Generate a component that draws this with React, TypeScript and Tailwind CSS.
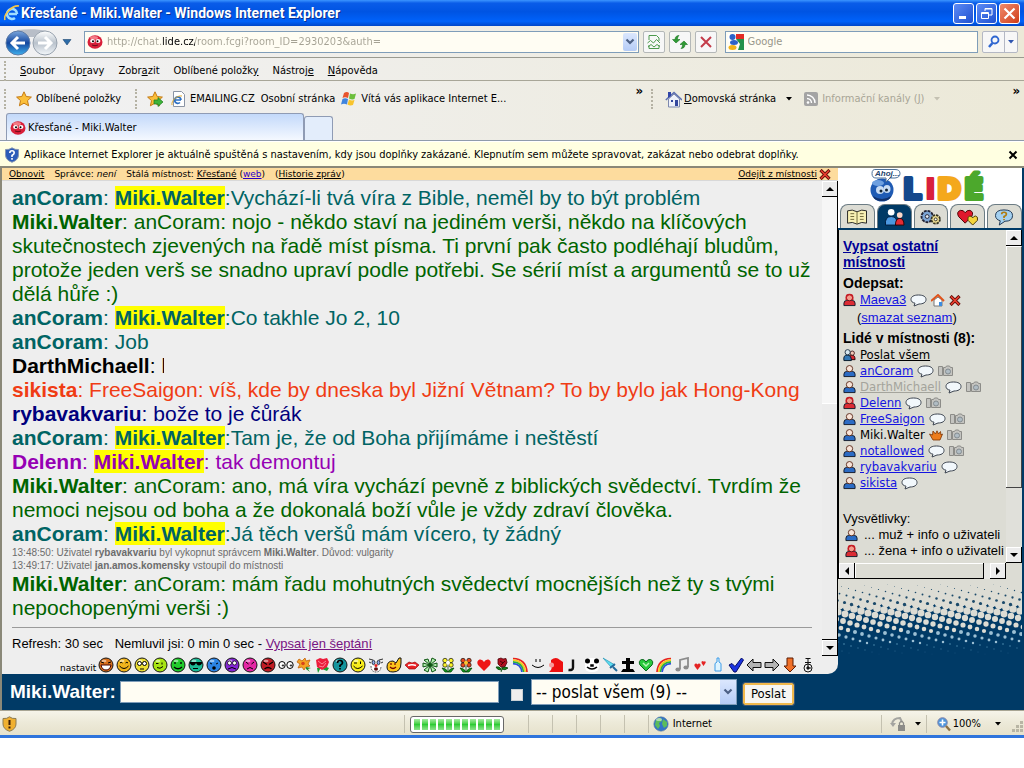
import * as React from "react";

const chatLines = [
  { who: "anCoram", color: "text-[#006464]", hi: true, text: "Vychází-li tvá víra z Bible, neměl by to být problém" },
  {
    who: "Miki.Walter",
    color: "text-[#006400]",
    text: " anCoram: nojo - někdo staví na jediném verši, někdo na klíčových skutečnostech zjevených na řadě míst písma. Ti první pak často podléhají bludům, protože jeden verš se snadno upraví podle potřebi. Se sérií míst a argumentů se to už dělá hůře :)",
  },
  { who: "anCoram", color: "text-[#006464]", hi: true, text: "Co takhle Jo 2, 10" },
  { who: "anCoram", color: "text-[#006464]", text: " Job" },
  { who: "DarthMichaell", color: "text-black", cut: true, text: "" },
  { who: "sikista", color: "text-[#f03c14]", text: " FreeSaigon: víš, kde by dneska byl Jižní Větnam? To by bylo jak Hong-Kong" },
  { who: "rybavakvariu", color: "text-[#00007d]", text: " bože to je čůrák" },
  { who: "anCoram", color: "text-[#006464]", hi: true, text: "Tam je, že od Boha přijímáme i neštěstí" },
  { who: "Delenn", color: "text-[#9600b4]", hi: true, text: " tak demontuj" },
  {
    who: "Miki.Walter",
    color: "text-[#006400]",
    text: " anCoram: ano, má víra vychází pevně z biblických svědectví. Tvrdím že nemoci nejsou od boha a že dokonalá boží vůle je vždy zdraví člověka.",
  },
  { who: "anCoram", color: "text-[#006464]", hi: true, text: "Já těch veršů mám vícero, ty žádný" },
];

const people = [
  { name: "anCoram", cam: true },
  { name: "DarthMichaell", cam: true, muted: true },
  { name: "Delenn", cam: true, woman: true },
  { name: "FreeSaigon", cam: true },
  { name: "Miki.Walter", cam: true, me: true },
  { name: "notallowed", cam: true },
  { name: "rybavakvariu" },
  { name: "sikista" },
];

export default function App() {
  return (
    <main className="min-h-screen bg-white font-['DejaVu_Sans_Condensed','DejaVu_Sans',sans-serif] text-[11px] leading-[14px] text-black">
      <div className="border-b-[3px] border-[#2f74dc] bg-[#ece9d8]">
        <TitleBar />
        <div className="bg-linear-to-r from-[#f1f1f3] to-[#ece9d8]">
          <AddressRow />
          <MenuRow />
          <FavoritesRow />
          <TabRow />
        </div>
        <InfoBar />
        <div className="flex border-l-2 border-t-2 border-[#8a8878] bg-[#003a66] pr-0.5">
          <ChatFrame />
          <Sidebar />
        </div>
        <SendBar />
        <StatusBar />
      </div>
    </main>
  );
}

function TitleBar() {
  return (
    <header className="flex h-[26px] items-center bg-[linear-gradient(to_bottom,#3c95ff,#0a5ce8_12%,#0054e3_45%,#0062fa_82%,#0046c8)] pl-1 pr-1 text-white">
      <svg width="16" height="18" viewBox="0 0 16 18">
        <path d="M13 10H5M13 10a5 5 0 1 0-2 4" fill="none" stroke="#9fdcff" strokeWidth="2.6" />
        <path d="M1 16C-1 11 8 1 15 2" fill="none" stroke="#f4c64a" strokeWidth="1.6" />
      </svg>
      <h1 className="ml-px flex-1 font-['Roboto','Noto_Sans',sans-serif] text-[14px] font-bold [text-shadow:1px_1px_0_#0a3190]">
        Křesťané - Miki.Walter - Windows Internet Explorer
      </h1>
      <div className="flex gap-0.5">
        <button aria-label="Minimalizovat" className="flex h-[21px] w-[21px] items-center justify-center rounded-[3px] border border-white bg-linear-to-br from-[#5d8bf5] to-[#1f4fd0]">
          <svg width="19" height="19"><path d="M5 13.500h7" stroke="#fff" strokeWidth="3" /></svg>
        </button>
        <button aria-label="Obnovit okno" className="flex h-[21px] w-[21px] items-center justify-center rounded-[3px] border border-white bg-linear-to-br from-[#5d8bf5] to-[#1f4fd0]">
          <svg width="19" height="19" fill="none" stroke="#fff">
            <path d="M8 7V4.500h7v6.500h-3M8 5h7" />
            <path d="M4.500 8.500h7v6h-7zM4.500 9.500h7" />
          </svg>
        </button>
        <button aria-label="Zavřít" className="flex h-[21px] w-[21px] items-center justify-center rounded-[3px] border border-white bg-linear-to-br from-[#f08a6a] to-[#cf3a12]">
          <svg width="19" height="19"><path d="M4.500 4.500l10 10M14.500 4.500l-10 10" stroke="#fff" strokeWidth="2.2" /></svg>
        </button>
      </div>
    </header>
  );
}

function AddressRow() {
  return (
    <div className="flex h-8 items-center border-b border-[#9a9a90] pl-1 pr-1.5">
      <div className="relative flex">
        <svg width="56" height="28" viewBox="0 0 56 28">
          <defs>
            <linearGradient id="back" x1="0" y1="0" x2="0" y2="1">
              <stop offset="0" stopColor="#7aa6dc" />
              <stop offset=".5" stopColor="#14479f" />
              <stop offset="1" stopColor="#3fb0ee" />
            </linearGradient>
            <linearGradient id="fwd" x1="0" y1="0" x2="0" y2="1">
              <stop offset="0" stopColor="#fff" />
              <stop offset=".5" stopColor="#b9c2cc" />
              <stop offset="1" stopColor="#f4f8fb" />
            </linearGradient>
          </defs>
          <path d="M13 2C24 1 34 1 43 3l-4 6H17z" fill="#b8bec8" />
          <circle cx="14" cy="15" r="12" fill="url(#back)" stroke="#5d7ba6" />
          <circle cx="41" cy="15" r="12" fill="url(#fwd)" stroke="#98a2ae" />
          <path d="M21 15H9M14 9l-6 6 6 6" fill="none" stroke="#fff" strokeWidth="3" />
          <path d="M34 15h12M41 9l6 6-6 6" fill="none" stroke="#fff" strokeWidth="3" />
        </svg>
        <button aria-label="Zpět" className="absolute left-0 top-0 h-7 w-7 rounded-full" />
        <button aria-label="Vpřed" className="absolute left-7 top-0 h-7 w-7 rounded-full" />
      </div>
      <button aria-label="Poslední stránky" className="ml-0.5 mr-3">
        <svg width="10" height="8"><path d="M1 1.500h8L5 7z" fill="#2d6ba8" stroke="#1b4470" strokeWidth=".6" /></svg>
      </button>
      <div className="flex h-[22px] flex-1 items-center border border-[#7f9db9] bg-[#fffdf3] pl-0.5 pr-px">
        <RedFace />
        <input
          aria-label="Adresa"
          defaultValue="http://chat.lide.cz/room.fcgi?room_ID=2930203&auth="
          className="ml-1 min-w-0 flex-1 bg-[linear-gradient(to_right,#a5a294_55px,#000_55px,#000_88px,#a5a294_88px)] bg-clip-text text-[11px] text-transparent outline-none"
        />
        <button aria-label="Historie adres" className="flex h-[18px] w-[14px] items-center justify-center rounded-xs bg-linear-to-b from-[#dbe7fd] to-[#b5ccf6]">
          <Chevron />
        </button>
      </div>
      <div className="ml-1 mr-2 flex gap-1">
        <ToolButton label="Kompatibilní zobrazení">
          <path d="M3 6V1.500h7.500l2.500 2.500v3M3 11v3.500h10V11M1.500 9l3-2.500 3 2.500 3-3.500L14 9M2 13l3-2.500L8 13l3-2.500 3 2" stroke="#4c9a4c" />
        </ToolButton>
        <ToolButton label="Aktualizovat">
          <path d="M4 9L0.500 5.500H3c0-3 2-4 4-4-1 1-1.500 2-1.500 4H8zM12 7l3.500 3.500H13c0 3-2 4-4 4 1-1 1.500-2 1.500-4H8z" fill="#2f9a34" stroke="#1d7524" strokeWidth=".6" />
        </ToolButton>
        <ToolButton label="Zastavit">
          <path d="M3 3l10 10M13 3L3 13" stroke="#c43c4a" strokeWidth="2" />
        </ToolButton>
      </div>
      <div className="flex h-[22px] w-1/4 items-center border border-[#7f9db9] bg-[#fffdf3] pl-0.5">
        <svg width="16" height="16" viewBox="0 0 16 16">
          <path d="M0 0h8v8H0z" fill="#fff" />
          <path d="M8 0h8v5H8z" fill="#e32b24" />
          <path d="M8 5h8v11H10l2-6z" fill="#23924a" />
          <ellipse cx="4.500" cy="3" rx="3" ry="3" fill="#2d62c8" />
          <ellipse cx="6" cy="8.500" rx="4" ry="2.500" fill="#2d62c8" />
          <ellipse cx="4.500" cy="13.500" rx="4" ry="2.500" fill="#f2b318" />
        </svg>
        <input aria-label="Hledat" placeholder="Google" className="ml-1 min-w-0 flex-1 text-[11px] outline-none placeholder:text-[#98968a]" />
      </div>
      <div className="ml-1 flex h-[22px] rounded-xs border border-[#b4b8c4] bg-[#f7f7f7]">
        <button aria-label="Spustit hledání" className="flex w-[22px] items-center justify-center border-r border-[#b4b8c4]">
          <svg width="14" height="14" fill="none" stroke="#2f66d0"><circle cx="8" cy="5" r="3.500" strokeWidth="1.800" /><path d="M5.500 8L2 12" strokeWidth="2.500" /></svg>
        </button>
        <button aria-label="Možnosti hledání" className="flex w-3 items-center justify-center text-[#2f55b0]">
          <Triangle />
        </button>
      </div>
    </div>
  );
}

function ToolButton({ label, children }: { label: string; children: React.ReactNode }) {
  return (
    <button aria-label={label} className="flex h-[22px] w-[22px] items-center justify-center rounded-xs border border-[#b4b8b8] bg-[#f7f7f7]">
      <svg width="16" height="16" viewBox="0 0 16 16" fill="none">{children}</svg>
    </button>
  );
}

function Triangle() {
  return <svg width="6" height="4"><path d="M0 0h6L3 3.500z" fill="currentColor" /></svg>;
}

function Chevron() {
  return <svg width="10" height="8"><path d="M1.500 1.500L5 5l3.500-3.500" fill="none" stroke="#4d6185" strokeWidth="2.200" /></svg>;
}

function RedFace() {
  return (
    <svg width="16" height="16" viewBox="0 0 16 16" className="shrink-0">
      <ellipse cx="8" cy="8" rx="7.500" ry="6.800" fill="#d8203a" />
      <ellipse cx="7" cy="3.800" rx="4" ry="1.800" fill="#f47c86" />
      <ellipse cx="5.500" cy="7" rx="2.400" ry="2" fill="#fff" />
      <ellipse cx="11" cy="7" rx="2.400" ry="2" fill="#fff" />
      <circle cx="6" cy="7.200" r="1" />
      <circle cx="10.500" cy="7.200" r="1" />
      <path d="M5 11q3 1.500 6 0" fill="none" stroke="#6c0a16" />
    </svg>
  );
}

function Grip() {
  return <span className="h-5 border-l-2 border-dotted border-[#b5b2a4]" />;
}

function MenuRow() {
  return (
    <nav className="flex h-[23px] items-center border-b border-[#a8a698] pl-1 pt-1">
      <Grip />
      <div className="ml-3.5 flex gap-3.5">
        <button><u>S</u>oubor</button>
        <button>Úp<u>r</u>avy</button>
        <button>Zobr<u>a</u>zit</button>
        <button>Oblíbené položk<u>y</u></button>
        <button>Nástroj<u>e</u></button>
        <button><u>N</u>ápověda</button>
      </div>
    </nav>
  );
}

function Star() {
  return <path d="M8 0.800l2.200 4.700 5.200.6-3.900 3.500 1.100 5.200L8 12.200l-4.600 2.600 1.100-5.200L.6 6.100l5.200-.6z" fill="#fbbf3a" stroke="#c47a14" />;
}

function FavoritesRow() {
  return (
    <div className="flex h-8 items-center pl-1 pt-1">
      <Grip />
      <button className="ml-2.5 flex items-center gap-1">
        <svg width="16" height="16"><Star /></svg>
        Oblíbené položky
      </button>
      <span className="ml-3.5 flex"><Grip /></span>
      <button aria-label="Přidat na panel" className="ml-2.5">
        <svg width="16" height="16"><Star /><path d="M7 9h4V6.500l5 4.500-5 4.500V13H7z" fill="#3fb43a" stroke="#1d7a1c" strokeWidth=".7" /></svg>
      </button>
      <a href="#emailing" className="ml-2 flex items-center gap-1">
        <svg width="15" height="16">
          <path d="M2.500.5h8l3 3v12h-11z" fill="#fff" stroke="#8a94a4" />
          <path d="M10 9H4M10 9a3.200 3.200 0 1 0-1 2.500" fill="none" stroke="#2a6fc4" strokeWidth="1.700" />
          <path d="M1 14C0 10 6 4 11 5" fill="none" stroke="#e0ac34" />
        </svg>
        EMAILING.CZ
      </a>
      <a href="#osobni" className="ml-1.5">Osobní stránka</a>
      <a href="#vitejte" className="ml-1.5 flex items-center gap-1">
        <svg width="16" height="16">
          <path d="M3 2q3-2 5 0L7 7Q4 5.500 1.500 7z" fill="#e8542c" />
          <path d="M9 2.500q3 1.500 6 0L13.500 8Q11 9 8 7.500z" fill="#6cbf3c" />
          <path d="M1.500 8Q4 6.500 7 8l-1 5.500Q3 12 0 13.500z" fill="#3f84de" />
          <path d="M8 8.500q2.500 1.500 5.500.5L12 14q-3 1-5.500-.5z" fill="#f8c42c" />
        </svg>
        Vítá vás aplikace Internet E...
      </a>
      <div className="ml-auto flex items-center self-stretch">
        <span className="mb-4 text-[13px] font-bold">»</span>
        <span className="ml-2 flex"><Grip /></span>
        <button className="ml-3 flex items-center gap-0.5">
          <svg width="17" height="17">
            <path d="M3.500 8v8h11V8L9 3z" fill="#eef1fa" stroke="#7d89ae" />
            <path d="M.8 9L9 1.500 17 9" fill="none" stroke="#5c6fb0" strokeWidth="1.600" />
            <path d="M3 1h3v4L3 7z" fill="#3145a8" />
            <path d="M6 9h2v2H6zM10 9h3v6h-3z" fill="#34489e" />
          </svg>
          <span><u>D</u>omovská stránka</span>
        </button>
        <button aria-label="Možnosti domovské stránky" className="ml-2.5"><Triangle /></button>
        <button className="ml-3 flex items-center gap-1 text-[#a8a596]">
          <svg width="14" height="14">
            <rect width="14" height="14" rx="2" fill="#a4a4a4" />
            <circle cx="4" cy="10.500" r="1.300" fill="#fff" />
            <path d="M3 6.500a4.500 4.500 0 0 1 4.500 4.500M3 3a8 8 0 0 1 8 8" fill="none" stroke="#fff" strokeWidth="1.400" />
          </svg>
          <span>Informační kanály (<u>J</u>)</span>
        </button>
        <span className="ml-2.5 text-[#c4c1b2]"><Triangle /></span>
        <span className="mb-4 ml-[72px] mr-1 text-[13px] font-bold">»</span>
      </div>
    </div>
  );
}

function TabRow() {
  return (
    <div className="flex h-7 items-end border-b border-[#8f9bab] pl-1.5">
      <button className="flex h-[27px] w-[298px] items-center gap-0.5 rounded-t-[3px] border border-b-0 border-[#8f9bb4] bg-linear-to-b from-[#c3d9fa] to-[#f4f8ff] pl-[3px] pt-0.5">
        <RedFace />
        Křesťané - Miki.Walter
      </button>
      <button aria-label="Nová karta" className="h-6 w-[29px] rounded-t-[3px] border border-b-0 border-[#8f9bb4] bg-[#e3edfb]" />
    </div>
  );
}

function InfoBar() {
  return (
    <div className="flex h-[25px] items-center border-t border-white bg-[#ffffe1] pl-1 pr-1.5 pt-0.5">
      <svg width="16" height="16">
        <path d="M8 .8Q11 3 14.500 2.500V8q0 5-6.500 7.300Q1.500 13 1.500 8V2.500Q5 3 8 .8z" fill="#2c5cb8" stroke="#8696b4" />
        <path d="M5.800 6q0-2.200 2.200-2.200T10.200 6q0 1-2.200 2.500V10M8 11v1.800" fill="none" stroke="#fff" strokeWidth="1.600" />
      </svg>
      <p className="ml-1 flex-1">
        Aplikace Internet Explorer je aktuálně spuštěná s nastavením, kdy jsou doplňky zakázané. Klepnutím sem můžete spravovat, zakázat nebo odebrat doplňky.
      </p>
      <button aria-label="Zavřít panel">
        <svg width="10" height="10"><path d="M1.500 1.500l7 7M8.500 1.500l-7 7" stroke="#000" strokeWidth="2" /></svg>
      </button>
    </div>
  );
}

function ArrowButton({ label, d }: { label: string; d: string }) {
  return (
    <button aria-label={label} className="flex h-4 w-4 shrink-0 items-center justify-center border-b border-r border-black bg-[#ececec] shadow-[inset_1px_1px_0_#fff]">
      <svg width="8" height="8"><path d={d} /></svg>
    </button>
  );
}

const UP = "M0 6h8L4 2z";
const DOWN = "M0 2h8L4 6z";
const LEFT = "M6 0v8L2 4z";
const RIGHT = "M2 0v8l4-4z";

function RedCross() {
  return (
    <svg width="12" height="11" viewBox="0 0 12 11">
      <path d="M1.500 1l9 9M10.500 1l-9 9" stroke="#5c0c08" strokeWidth="3.200" />
      <path d="M2 1.500l8 8M10 1.500l-8 8" stroke="#ec4030" strokeWidth="1.700" />
    </svg>
  );
}

function ChatFrame() {
  return (
    <section className="flex min-w-0 flex-1 flex-col rounded-br-[10px] bg-[#eeeeee]">
      <div className="flex h-[13px] items-center border-b border-[#d8d8d8] bg-[#fddc9e] px-[7px] font-['DejaVu_Sans',sans-serif] text-[9px] leading-3">
        <a href="#obnovit" className="underline">Obnovit</a>
        <span className="ml-2.5">Správce: <i>není</i></span>
        <span className="ml-2.5">
          Stálá místnost: <a href="#krestane" className="underline">Křesťané</a> (<a href="#web" className="text-[#2a00c8] underline">web</a>)
        </span>
        <span className="ml-2.5">(<a href="#historie" className="underline">Historie zpráv</a>)</span>
        <a href="#odejit" className="ml-auto mr-0.5 underline">Odejít z místnosti</a>
        <RedCross />
      </div>
      <div className="flex flex-1">
        <div className="flex-1 pl-2.5 pr-2.5 pt-[5px] font-['Liberation_Sans',Arial,sans-serif]">
          <div className="text-[21px] leading-6">
            {chatLines.map((l, i) => (
              <ChatLine key={i} {...l} />
            ))}
          </div>
          <p className="text-[10px] leading-[13px] text-[#6c6c6c]">
            13:48:50: Uživatel <b>rybavakvariu</b> byl vykopnut správcem <b>Miki.Walter</b>. Důvod: vulgarity
          </p>
          <p className="text-[10px] leading-[13px] text-[#6c6c6c]">
            13:49:17: Uživatel <b>jan.amos.komensky</b> vstoupil do místnosti
          </p>
          <div className="text-[21px] leading-6">
            <ChatLine who="Miki.Walter" color="text-[#006400]" text=" anCoram: mám řadu mohutných svědectví mocnějších než ty s tvými nepochopenými verši :)" />
          </div>
          <hr className="mt-[7px] border-[#9a9a9a]" />
          <p className="mt-2 pb-1 text-[13px] leading-4">
            Refresh: 30 sec <span className="ml-2">Nemluvil jsi: 0 min 0 sec - </span>
            <a href="#septani" className="text-[#781482] underline">Vypsat jen šeptání</a>
          </p>
        </div>
        <div className="flex w-4 flex-col border-r border-black bg-[#f6f6f6]">
          <ArrowButton label="Nahoru" d={UP} />
          <div className="flex-1" />
          <div className="h-1/2 border-b border-t border-b-black border-t-white bg-[#ececec]" />
          <ArrowButton label="Dolů" d={DOWN} />
        </div>
      </div>
      <div className="flex h-[18px] items-center pl-[58px]">
        <a href="#nastavit" className="mt-1.5 font-['DejaVu_Sans',sans-serif] text-[9px] leading-3">nastavit</a>
        <div className="ml-0.5 flex gap-0.5">
          {SMILEYS.map((s, i) => (
            <button key={i} aria-label={"smajlík " + (i + 1)} className="h-4 w-4">
              <svg width="16" height="16" viewBox="0 0 16 16">{s}</svg>
            </button>
          ))}
        </div>
      </div>
    </section>
  );
}

function ChatLine({ who, color, hi, cut, text }: { who: string; color: string; hi?: boolean; cut?: boolean; text: string }) {
  return (
    <p className={color}>
      <b>{who}</b>:{" "}
      {hi && (
        <>
          <b className="bg-[#ffff00]">Miki.Walter</b>:
        </>
      )}
      {cut && <span className="inline-block h-6 w-[3px] overflow-hidden align-bottom">k</span>}
      {text}
    </p>
  );
}

function face(fill: string, extra: React.ReactNode) {
  return (
    <>
      <circle cx="8" cy="8" r="7" fill={fill} stroke="#141414" />
      <ellipse cx="6" cy="4" rx="2.500" ry="1.300" fill="#fff" opacity=".5" />
      {extra}
    </>
  );
}

const heart = "M8 14L2 8Q0 4 3.500 2.500 6.500 2 8 5q1.500-3 4.500-2.500Q16 4 14 8z";
const smile = <path d="M5 5v2M11 5v2M4 10q4 3.500 8 0" fill="none" stroke="#000" strokeWidth="1.300" />;

function flower(petal: string, center: string) {
  return (
    <>
      <path d="M8 9v6M2 11q4 0 6 4 2-4 6-4l-3 4H5z" fill="#129a18" stroke="#064a0a" strokeWidth=".8" />
      <g fill={petal} stroke="#111" strokeWidth=".7">
        <circle cx="5" cy="3.500" r="2.200" /><circle cx="11" cy="3.500" r="2.200" />
        <circle cx="5" cy="8" r="2.200" /><circle cx="11" cy="8" r="2.200" />
      </g>
      <circle cx="8" cy="5.800" r="2" fill={center} />
    </>
  );
}

function rose(color: string, dark: string) {
  return (
    <>
      <path d="M8 8q1 4-1 7M8 11q3-2 6 0-3 3-6 1M7 13q-4 0-5-3 4-1 5 2" fill="#118a18" stroke="#07420a" strokeWidth=".8" />
      <path d="M4 2l3-1 2 1 3-.5 1 4-2 4-4 .5L4 7z" fill={color} stroke={dark} strokeWidth=".8" />
      <path d="M6 4l3 2 2-2M7 8l2-2" fill="none" stroke={dark} />
    </>
  );
}

function rainbow(flip?: boolean) {
  return (
    <g transform={flip ? "translate(16 0) scale(-1 1)" : undefined} fill="none" strokeWidth="1.700">
      <path d="M1 1.500Q14 2 15 15" stroke="#e8201c" />
      <path d="M1 3.200Q12 4 13.300 15" stroke="#f8c81c" />
      <path d="M1 4.900Q10.500 5.500 11.600 15" stroke="#28b43c" />
      <path d="M1 6.600Q9 7 9.900 15" stroke="#2c50d8" />
    </g>
  );
}

const SMILEYS: React.ReactNode[] = [
  face("#d8701c", <><path d="M3 5l3 1M13 5l-3 1" stroke="#000" /><path d="M3 8h10q-1 5-5 5T3 8z" fill="#fff" stroke="#400" /></>),
  face("#f0b41c", <path d="M4 6q1-1.500 2.500 0M9.500 6q1.500-1.500 2.500 0M3.500 9q4.500 5 9 0" fill="none" stroke="#000" />),
  face("#ecdf34", <><g fill="#fff" stroke="#000"><circle cx="5.500" cy="6.500" r="2" /><circle cx="10.500" cy="6.500" r="2" /></g><path d="M6 12h4" stroke="#000" /></>),
  face("#a8e414", <path d="M4 6.500h2.500M10 5.500v2M5 10.500q3 2 6-1" fill="none" stroke="#000" />),
  face("#22cc2c", smile),
  face("#1cba94", <><path d="M2 5h12v1.500q-1 2-3 2T8.500 6.500h-1Q7 8.500 5 8.500T2 6.500z" /><path d="M5 11.500h5" stroke="#000" /></>),
  face("#2c84e4", <><path d="M4 6l2 1M12 6l-2 1" stroke="#000" /><circle cx="8" cy="11" r="1.800" /></>),
  face("#8426d4", <><g fill="#fff" stroke="#000" strokeWidth=".7"><circle cx="5.500" cy="6" r="2" /><circle cx="10.500" cy="6" r="2" /></g><path d="M4 12q4-3 8 0" fill="none" stroke="#000" /></>),
  face("#e426a4", <path d="M4 5l2.500 2M12 5L9.500 7M5 12q3-3 6 0" fill="none" stroke="#000" />),
  face("#c01c24", <path d="M3 5l4 2.500M13 5L9 7.500M4.500 12q3.500-3 7 0" fill="none" stroke="#000" strokeWidth="1.300" />),
  <g fill="#fff" stroke="#000"><ellipse cx="4" cy="8" rx="3.200" ry="3.500" /><ellipse cx="12" cy="8" rx="3.200" ry="3.500" /><circle cx="5" cy="8.500" r=".7" /><circle cx="13" cy="8.500" r=".7" /></g>,
  <><path d="M3 2l3 2 3-3 1 3 4-1-2 4 2 2-4 1-2 3-2-3-4 1 2-4-3-2z" fill="#f4a424" stroke="#c4620c" strokeWidth=".8" /><circle cx="7" cy="6.500" r="1.800" fill="#d8441c" /><path d="M10 10l5 1-3 1 2 3-4-3z" fill="#1c8c2c" /></>,
  <><path d="M10 9l5 2-2 3-5-2zM3 11l4-1-3 6z" fill="#18a030" /><path d="M2 3l4-2 3 1 4-1 2 4-2 5-5 3-5-3z" fill="#ec1c3c" /><path d="M4 4l4 3 4-3M5 9l4 1 3-4" fill="none" stroke="#ff8494" /></>,
  face("#14949c", <path d="M5.500 6q0-2.500 2.500-2.500T10.500 6Q10.500 7 8 8.500V10M8 11v1.600" fill="none" stroke="#000" strokeWidth="1.700" />),
  face("#f8ec1c", <path d="M4 6h3M10.500 4.500v2.500M3.500 9q4 5 9 0" fill="none" stroke="#000" />),
  <><path d="M1 2l4 1M15 2l-4 1M1 5l2 1M15 5l-2 1" stroke="#333" /><circle cx="8" cy="8.500" r="5.500" fill="#fff" /><g fill="#8ca8ec" stroke="#111" strokeWidth=".8"><ellipse cx="5.500" cy="5.500" rx="1.500" ry="2.200" /><ellipse cx="10.500" cy="5.500" rx="1.500" ry="2.200" /></g><circle cx="8" cy="8.500" r="1.500" fill="#e82020" /><path d="M3 9q0 6 5 6t5-6" fill="none" stroke="#555" strokeDasharray="1.500 1" /><ellipse cx="8" cy="12" rx="2" ry="1.800" fill="#5c1010" /></>,
  <><path d="M10 6l3-5h2v5q0 9-8 9-6 0-6-5 0-6 6-6z" fill="#fcc41c" stroke="#111" /><path d="M5 6v2M9 6v2M4 10q3 3 6 0" fill="none" stroke="#700" strokeWidth="1.200" /></>,
  <><path d="M1 8l4-3 3 1 3-1 4 3-4 4H5z" fill="#e82024" stroke="#9c0c10" strokeWidth=".7" /><path d="M4 8.500q4-1.500 8 0" fill="none" stroke="#fff" strokeWidth="1.500" /></>,
  <g stroke="#0c5410" fill="#b4f0b0"><path d="M8 8L2 3l4-1zM8 8l6-5-4-2zM8 8l6 5-4 2zM8 8l-6 5 4 2zM8 8L1 6v4zM8 8l7-2v4z" /></g>,
  flower("#fcf42c", "#fff"),
  flower("#e8481c", "#fcc42c"),
  <path d={heart} fill="#ee1818" />,
  rose("#b01020", "#4c0408"),
  rainbow(),
  <path d="M6 2v3M10 2v3M2 8q6 5 12 0" fill="none" stroke="#000" />,
  <><path d="M3 3q5-4 9 0l3 2v10H1q4-3 2-6z" fill="#ee1010" /><circle cx="3.500" cy="8" r="2.500" fill="#f89c9c" /></>,
  <path d="M7 2.500v8q0 3-4.500 2.500" fill="none" stroke="#111" strokeWidth="2.400" />,
  <><rect x="1" y="1" width="14" height="14" rx="5" fill="#fff" /><circle cx="3.500" cy="4" r="2.500" /><circle cx="12.500" cy="4" r="2.500" /><path d="M7 8h2v1H7zM3 10q5 4 10 0" fill="none" stroke="#000" strokeWidth="1.500" /></>,
  <><path d="M1 1l12 7-4 2z" fill="#5ce0f4" stroke="#2494b4" strokeWidth=".7" /><path d="M8 11l5-4M11 10l4 4" stroke="#246c9c" strokeWidth="2" /></>,
  <path d="M6 1h4v3h4v3h-4v5h3l2 3H1l2-3h3V7H2V4h4z" />,
  <><path d={heart} fill="#28c83c" stroke="#06661a" /><path d="M5 6l3 3 3-3" fill="none" stroke="#b4f8b4" strokeWidth="1.500" /></>,
  rainbow(true),
  <><path d="M6 12V3l8-2v9" fill="none" stroke="#8c8c8c" strokeWidth="1.800" /><ellipse cx="4" cy="12.500" rx="2.600" ry="2" fill="#8c8c8c" /><ellipse cx="12" cy="10.500" rx="2.600" ry="2" fill="#8c8c8c" /></>,
  <g fill="#e42424"><path d="M5.500 13L2.500 9q-.5-2.500 1.500-2.500 1 0 1.500 1Q6 6.500 7 6.500 9 6.500 8.500 9z" /><path d="M11.500 9L9.500 6Q9 4 11 4l.8.800Q12.500 4 13.500 4.500 14 5 13.500 6z" /></g>,
  <path d="M7 1h2v4l2 1.500V14H5V6.500L7 5z" fill="#dff4ff" stroke="#3c9ce8" />,
  <path d="M1 8l3-1.500 3 3L13.500 1 15.500 3 8 15H6z" fill="#1c34e0" stroke="#040c64" />,
  <path d="M1 8l6-6v3.500h8v5H7V14z" fill="#b4b4b4" stroke="#111" />,
  <path d="M15 8L9 2v3.500H1v5h8V14z" fill="#b4b4b4" stroke="#111" />,
  <path d="M8 15l6-6h-3V1H5v8H2z" fill="#f07028" stroke="#5c1c04" />,
  <g fill="none" stroke="#111"><circle cx="8" cy="11" r="4" /><path d="M8 11V2M5.500 1.500h5M5 5.500h6M8 11h3" /><circle cx="8" cy="11" r="1.200" fill="#111" /></g>,
];

function Person({ woman }: { woman?: boolean }) {
  return (
    <svg width="13" height="14" viewBox="0 0 14 14" className="shrink-0">
      <path d="M1 13V10.500q0-3 3-3h6q3 0 3 3V13z" fill={woman ? "#dc2c34" : "#2c6cc4"} stroke="#101828" />
      <circle cx="7" cy="4.500" r="3.400" fill={woman ? "#f49c8c" : "#f8e4d8"} stroke={woman ? "#6c0810" : "#5c2c1c"} />
      {woman && <path d="M3.500 7V4q0-3 3.500-3t3.500 3v3" fill="none" stroke="#c81c24" strokeWidth="1.500" />}
    </svg>
  );
}

function Bubble() {
  return (
    <svg width="17" height="13" viewBox="0 0 17 13">
      <path d="M8.500 1C13 1 16 2.500 16 5.500s-3 4.500-7 4.500L4 12l1-2.800C2.500 8.600 1 7.500 1 5.500c0-3 3-4.500 7.500-4.500z" fill="#f2f8fc" stroke="#3c4450" />
    </svg>
  );
}

function Camera() {
  return (
    <svg width="16" height="12" viewBox="0 0 16 12">
      <path d="M.5 1.500h4v9h-4zM5.500 2.500h2l1-1.500h3l1 1.500h2v8h-9z" fill="#c4c4c0" stroke="#8c8c88" />
      <circle cx="10" cy="6.500" r="2.500" fill="#b0bcc4" stroke="#848c90" />
    </svg>
  );
}

function Sidebar() {
  return (
    <aside className="flex w-[184px] shrink-0 flex-col bg-white">
      <div className="flex h-[37px] pl-6">
        <svg width="132" height="37" viewBox="0 0 132 37" className="overflow-visible">
          <circle cx="20" cy="22" r="11.500" fill="#1f5bb4" />
          <ellipse cx="16" cy="15" rx="6" ry="3" fill="#6ea0e0" />
          <path d="M11 28q9 6 18 0-1 5-9 5t-9-5z" fill="#12326c" />
          <ellipse cx="18" cy="22" rx="4" ry="4" fill="#c8dcf4" /><ellipse cx="25" cy="21" rx="3.500" ry="4" fill="#c8dcf4" />
          <circle cx="19" cy="23" r="1.500" fill="#112233" /><circle cx="24.500" cy="22" r="1.500" fill="#112233" />
          <path d="M14 1.500h19q5 0 5 4t-5 4.500h-5l-4 4v-4H14q-4 0-4-4.500t4-4z" fill="#fff" stroke="#4c7098" />
          <text x="13" y="8" fontSize="8" fontStyle="italic" fontWeight="bold" fill="#24446c" fontFamily="Liberation Sans">Ahoj...</text>
          <g fontFamily="DejaVu Sans" fontWeight="bold" fontSize="29" strokeWidth="4" strokeLinejoin="round">
            <text x="41" y="31" fill="#14488c" stroke="#14488c">L</text>
            <text x="63" y="31" fill="#d8203c" stroke="#d8203c" strokeWidth="2">I</text>
            <text x="75" y="31" fill="#f4a81c" stroke="#f4a81c">D</text>
            <text x="102" y="31" fill="#4ca82c" stroke="#4ca82c">É</text>
          </g>
        </svg>
      </div>
      <div className="flex h-[25px] items-end gap-0.5 border-b-2 border-[#003a66] pl-0.5">
        <SideTab label="Noviny"><path d="M1 3q5-2 10 1 5-3 10-1v13q-5-2-10 1-5-3-10-1z" fill="#f8f0b4" stroke="#222" /><path d="M11 4v13M4 6h4M4 9h4M4 12h4M14 6h4M14 9h4M14 12h4" stroke="#6c6438" /></SideTab>
        <SideTab label="Lidé" active><circle cx="8" cy="4.500" r="3.500" fill="#fff" /><path d="M2 18q-1-9 6-9t6 9z" fill="#4c98e0" stroke="#001c3c" /><circle cx="17" cy="7.500" r="3" fill="#fcd8c8" /><path d="M12.500 18q0-7 4.500-7t4.500 7z" fill="#e42c34" stroke="#300" /></SideTab>
        <SideTab label="Nastavení"><circle cx="8" cy="9" r="6" fill="#7ca4d4" stroke="#223" strokeWidth="2" strokeDasharray="3 1" /><circle cx="8" cy="9" r="2" fill="#e4ecf4" stroke="#223" /><circle cx="17" cy="12" r="4.500" fill="#e8d890" stroke="#332" strokeWidth="1.800" strokeDasharray="2.500 1" /><circle cx="17" cy="12" r="1.500" fill="#fff" stroke="#332" /></SideTab>
        <SideTab label="Seznamka"><path d="M9 16L2 9Q-.5 4 4 2.500 7.500 2 9 5q2-3 5-2.500Q18.500 4 16 9z" fill="#e0182c" stroke="#400" /><path d="M17 18l-5-5q-1-4 2-4.500 2 0 3 2 1-2 3-2 3 .5 2 4.500z" fill="#f4d43c" stroke="#430" /></SideTab>
        <SideTab label="Nápověda"><path d="M11 2q9 0 9 6t-8 6l-6 4 1-4.500Q2 12 2 8q0-6 9-6z" fill="#a4d0f0" stroke="#1c3450" /><path d="M8.500 6.500q0-2 2.500-2t2.500 2Q13.500 8 11 9v1.500M11 11.500v1.500" fill="none" stroke="#b07c10" strokeWidth="1.800" /></SideTab>
      </div>
      <div className="flex h-[333px] overflow-hidden border-l border-black bg-[#dcdcd4] font-['Liberation_Sans',Arial,sans-serif] text-[14px] leading-4">
        <div className="min-w-0 flex-1 overflow-hidden whitespace-nowrap pl-1 pt-2">
          <a href="#ostatni" className="block font-bold text-[#000096] underline">Vypsat ostatní<br />místnosti</a>
          <h2 className="mt-[5px] font-bold">Odepsat:</h2>
          <p className="flex items-center gap-1 pt-px">
            <Person woman />
            <a href="#maeva3" className="text-[13px] text-[#1414e0] underline">Maeva3</a>
            <Bubble />
            <svg width="14" height="13" viewBox="0 0 14 13"><path d="M3 6v6h8V6L7 3z" fill="#fff" stroke="#777" /><path d="M0 7l7-6 6 6" fill="none" stroke="#e0541c" strokeWidth="2" /><path d="M8 8h3v4H8z" fill="#3c8ce0" /></svg>
            <RedCross />
          </p>
          <p className="mt-0.5 pl-3.5 text-[13px]">
            (<a href="#smazat" className="text-[#1414e0] underline">smazat seznam</a>)
          </p>
          <h2 className="mt-1 font-bold">Lidé v místnosti (8):</h2>
          <ul className="mt-px font-['DejaVu_Sans_Condensed','DejaVu_Sans',sans-serif] text-[13px]">
            <li className="flex items-center gap-1">
              <svg width="13" height="14" viewBox="0 0 14 14">
                <path d="M6 12q0-5 3.500-5t3.500 5z" fill="#d82c34" stroke="#200" /><circle cx="10" cy="5" r="2.300" fill="#f4c8b8" stroke="#422" />
                <path d="M1 13q-1-6 3.500-6T9 13z" fill="#3478b4" stroke="#012" /><circle cx="5" cy="4" r="2.800" fill="#d8e8f0" stroke="#234" />
              </svg>
              <a href="#vsem" className="underline">Poslat všem</a>
            </li>
            {people.map((p) => (
              <li key={p.name} className="flex items-center gap-1">
                <Person woman={p.woman} />
                {p.me ? (
                  <span>{p.name}</span>
                ) : (
                  <a href={"#" + p.name} className={p.muted ? "text-[#a4a49c] underline" : "text-[#1414e0] underline"}>{p.name}</a>
                )}
                {p.me ? (
                  <svg width="14" height="11" viewBox="0 0 14 11"><path d="M.5 4l3 1L4 1l2.500 3L8 .8 9.500 4l2-2.500.5 3.500 1.500-1-2.500 6H4z" fill="#ec7c1c" stroke="#7c3404" strokeWidth=".8" /></svg>
                ) : (
                  <Bubble />
                )}
                {p.cam && <Camera />}
              </li>
            ))}
          </ul>
          <p className="mt-5 text-[13px]">Vysvětlivky:</p>
          <p className="flex items-center gap-1.5 pl-0.5 text-[13px]"><Person /><span>... muž + info o uživateli</span></p>
          <p className="flex items-center gap-1.5 pl-0.5 text-[13px]"><Person woman /><span>... žena + info o uživateli</span></p>
        </div>
        <div className="flex w-4 shrink-0 flex-col bg-[#e0e0da]">
          <ArrowButton label="Seznam nahoru" d={UP} />
          <div className="h-[242px] border-b border-r border-t border-[#444] border-t-white bg-[#dcdcd4] shadow-[inset_1px_0_0_#fff]" />
          <div className="flex-1" />
          <ArrowButton label="Seznam dolů" d={DOWN} />
        </div>
      </div>
      <div className="flex border-l border-black bg-[#dcdcd4] pr-4">
        <ArrowButton label="Seznam vlevo" d={LEFT} />
        <div className="w-[129px] border-b border-r border-black bg-[#dcdcd4] shadow-[inset_1px_1px_0_#fff]" />
        <div className="flex-1 bg-[#e8e8e4]" />
        <ArrowButton label="Seznam vpravo" d={RIGHT} />
      </div>
      <div className="flex-1 bg-[#003a66]">
        <Halftone />
      </div>
    </aside>
  );
}

// dark dots grow downwards, light dots shrink below the middle line
function Halftone() {
  const dark: React.ReactNode[] = [];
  const light: React.ReactNode[] = [];
  const mid = 24;
  for (let i = -4; i < 34; i++) {
    for (let j = -10; j < 14; j++) {
      const x = i * 7 - j * 2;
      const y = j * 7 + i * 2 - 20;
      if (y > mid - 5) {
        const r = 4.3 - Math.max(0, y - mid) * 0.078;
        if (r > 0.3)
          light.push(<circle key={`l${i},${j}`} cx={x} cy={y} r={r} fill={y > 64 ? "#2c6a90" : y > 52 ? "#9cc0d4" : "#dcdcd4"} />);
      }
      const dx = x + 2.5;
      const dy = y + 4.5;
      const dr = (dy - 2) * 0.07;
      if (dy < mid + 2 && dr > 0.2) {
        dark.push(<circle key={`d${i},${j}`} cx={dx} cy={dy} r={dr} fill="#1c4a6a" />);
      }
    }
  }
  return (
    <svg width="100%" height="84" viewBox="0 0 184 84" preserveAspectRatio="xMidYMin slice">
      <rect width="184" height={mid} fill="#dcdcd4" />
      {light}
      {dark}
    </svg>
  );
}

function SideTab({ label, active, children }: { label: string; active?: boolean; children: React.ReactNode }) {
  return (
    <button
      aria-label={label}
      className={`flex h-6 flex-1 items-center justify-center rounded-t-lg border border-b-0 border-[#6c7c84] ${active ? "bg-[#003a66]" : "bg-[#dcdcd4]"}`}
    >
      <svg width="25" height="18" viewBox="0 0 23 19">{children}</svg>
    </button>
  );
}

function SendBar() {
  return (
    <form className="flex h-9 items-center border-l-2 border-[#8a8878] bg-[#003a66] pl-2" onSubmit={(e) => e.preventDefault()}>
      <label htmlFor="msg" className="font-['Liberation_Sans',Arial,sans-serif] text-[19px] font-bold leading-6 text-white">Miki.Walter:</label>
      <input id="msg" autoFocus className="ml-1 h-[22px] w-[379px] border border-[#7f9db9] bg-[#fffdf3] px-0.5 text-[16px] outline-none" />
      <input type="checkbox" aria-label="Šeptat" className="ml-3 mt-1.5 h-3 w-3 appearance-none border border-[#c8d0d4] bg-[#eeeeee]" />
      <div className="relative ml-2 flex">
        <select aria-label="Komu" className="h-[26px] w-[206px] appearance-none border border-[#7f9db9] bg-[#fffdf3] pl-1 text-[17px] leading-5">
          <option>-- poslat všem (9) --</option>
        </select>
        <span className="pointer-events-none absolute bottom-px right-px top-px flex w-4 items-center justify-center bg-linear-to-b from-[#dbe7fd] to-[#b5ccf6]">
          <Chevron />
        </span>
      </div>
      <button className="ml-1.5 mt-1 h-[22px] rounded-xs border-2 border-[#f0b84c] bg-[#f6f5f2] px-1.5 text-[13px] leading-4 outline outline-[#3c5878]">Poslat</button>
    </form>
  );
}

function Sep() {
  return <span className="h-[18px] border-l border-[#c4c1b0]" />;
}

function StatusBar() {
  return (
    <footer className="flex h-[25px] items-center border-t border-[#a8a594] bg-linear-to-b from-[#f6f4ea] via-[#ece9d8] to-[#e6e2cc] pl-0.5 pt-0.5">
      <svg width="15" height="16">
        <path d="M7.500.8Q10 3 14 2.500V8q0 5-6.500 7.300Q1 13 1 8V2.500Q5 3 7.500.8z" fill="#f0b030" stroke="#8c7c54" />
        <path d="M7.500 4v5M7.500 10.500v2" stroke="#3c1c04" strokeWidth="2" />
      </svg>
      <div className="ml-auto flex items-center">
        <Sep />
        <div className="ml-[5px] flex h-[17px] gap-0.5 rounded-[3px] border border-[#686868] bg-white px-[3px] py-0.5">
          {Array.from({ length: 11 }, (_, i) => (
            <span key={i} className="w-1.5 bg-linear-to-b from-[#a4eca0] via-[#2ccc34] to-[#8ce48c]" />
          ))}
        </div>
        <div className="ml-6 flex gap-[23px]">
          <Sep /><Sep /><Sep /><Sep /><Sep /><Sep />
        </div>
        <svg width="16" height="16" className="ml-1">
          <circle cx="8" cy="8" r="7.200" fill="#3474c8" stroke="#5c7c9c" strokeWidth=".6" />
          <path d="M3 4q3-3 5-2l1 3-3 2 1 3-2 3-3-4zM10 3l4 3v4l-3 2-2-4z" fill="#5cbc5c" />
          <ellipse cx="6" cy="3.500" rx="3" ry="1.500" fill="#fff" opacity=".5" />
        </svg>
        <span className="ml-1 w-[208px]">Internet</span>
        <Sep />
        <svg width="17" height="16" className="ml-2">
          <path d="M2 8q1-6 8-6l2 4" fill="none" stroke="#a4a4a0" strokeWidth="2" />
          <path d="M0 7h6l-3 4z" fill="#a4a4a0" />
          <path d="M8 9h7v6H8z" fill="#8c8c88" /><path d="M9.500 9V7q2-3 4 0v2" fill="none" stroke="#8c8c88" strokeWidth="1.300" />
        </svg>
        <span className="ml-2 mr-[5px]"><Triangle /></span>
        <Sep />
        <svg width="14" height="15" className="ml-2.5">
          <circle cx="5.500" cy="5.500" r="4.800" fill="#4c94dc" stroke="#88a" />
          <path d="M5.500 2.500v6M2.500 5.500h6" stroke="#fff" strokeWidth="1.600" />
          <path d="M9 9l4 4.500" stroke="#8c7044" strokeWidth="2.400" />
        </svg>
        <span className="ml-0.5">100%</span>
        <span className="ml-3.5"><Triangle /></span>
        <svg width="13" height="13" className="ml-2.5 self-end" fill="#b8b5a4"><path d="M9 1h3v3H9zM9 5h3v3H9zM5 5h3v3H5zM9 9h3v3H9zM5 9h3v3H5zM1 9h3v3H1z" /></svg>
      </div>
    </footer>
  );
}
